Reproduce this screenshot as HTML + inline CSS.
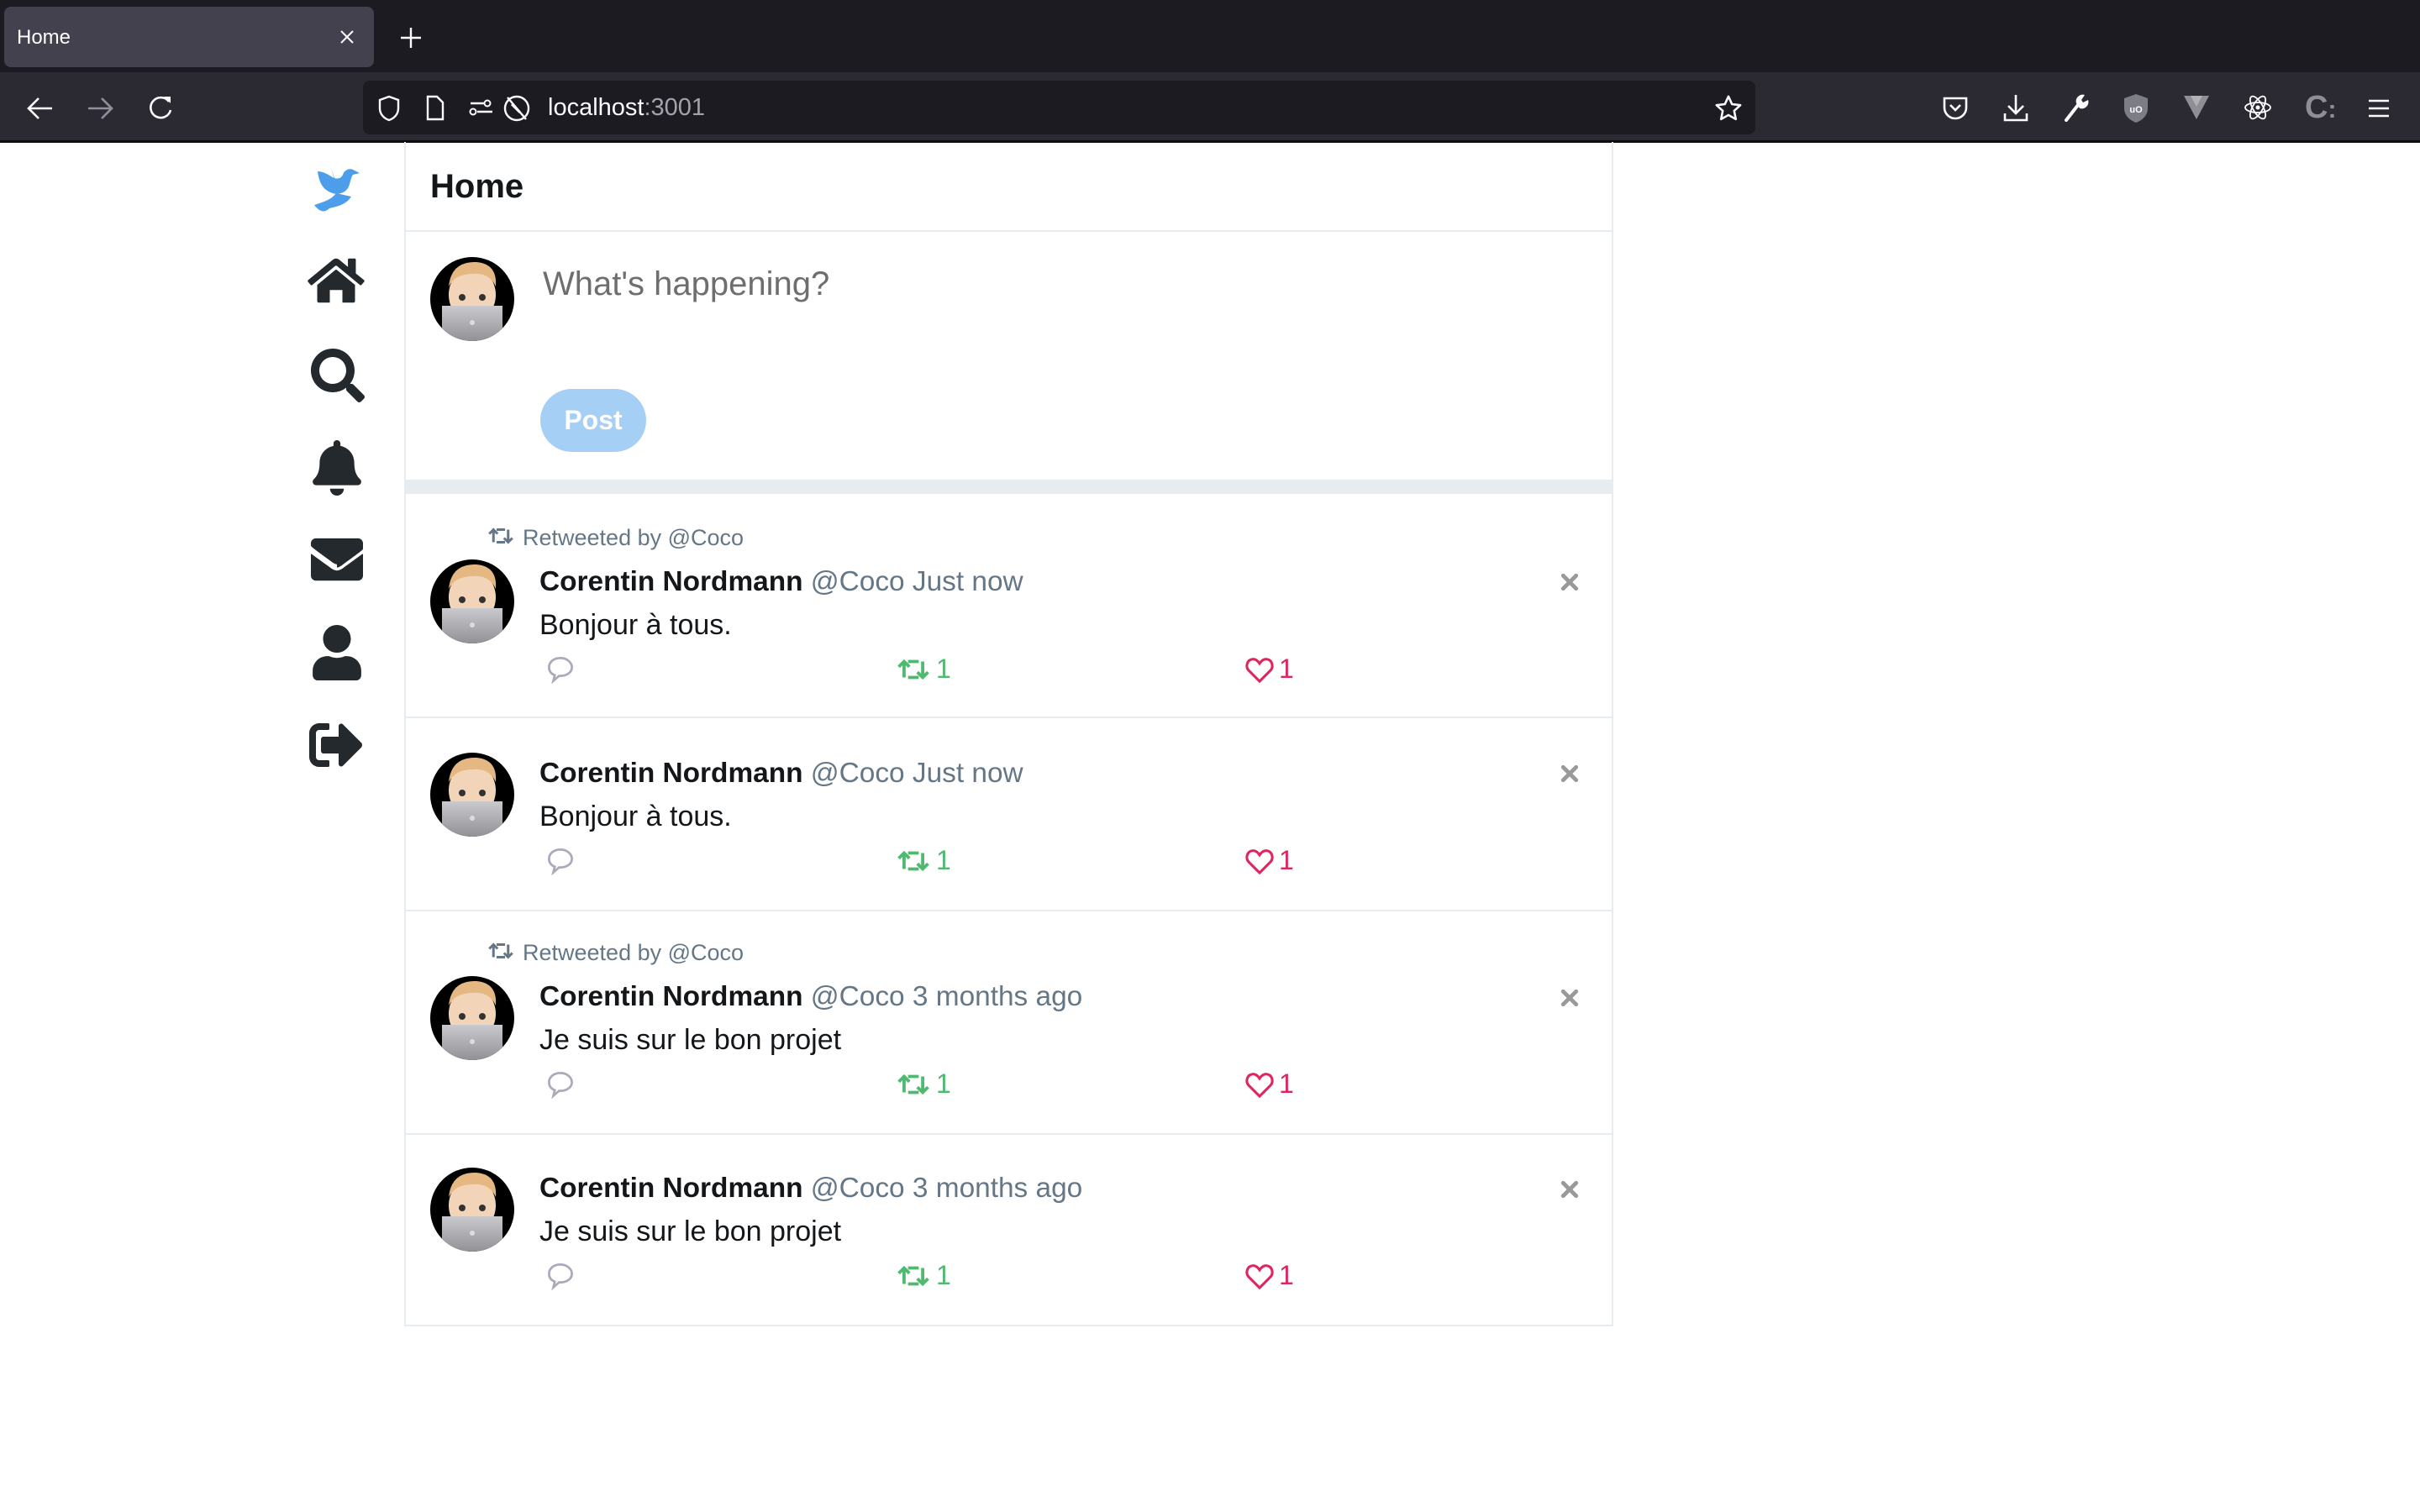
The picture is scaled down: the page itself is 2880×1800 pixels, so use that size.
<!DOCTYPE html>
<html><head><meta charset="utf-8"><style>
*{margin:0;padding:0;box-sizing:border-box}
body{width:2880px;height:1800px;background:#fff;font-family:"Liberation Sans",sans-serif;position:relative;overflow:hidden}
.a{position:absolute}
.tabbar{left:0;top:0;width:2880px;height:86px;background:#1c1b22}
.tool{left:0;top:86px;width:2880px;height:83px;background:#2b2a33}
.main{left:481px;top:169px;width:1439px;height:1410px;border-left:2px solid #e6ecf0;border-right:2px solid #e6ecf0;border-bottom:2px solid #e6ecf0}
.hl{position:absolute;left:481px;width:1439px;height:2px;background:#e6ecf0}
.name{font-size:33.4px;color:#14171a;white-space:nowrap}
.name b{font-weight:bold}
.name span{color:#657786}
.txt{font-size:34px;color:#14171a}
.rt{font-size:27px;color:#657786;white-space:nowrap}
.g{color:#4fba6f;font-size:32px}
.r{color:#e0245e;font-size:32px}
</style></head><body>
<svg width="0" height="0" style="position:absolute">
<defs>
<symbol id="av" viewBox="0 0 100 100">
<clipPath id="cc"><circle cx="50" cy="50" r="50"/></clipPath>
<g clip-path="url(#cc)">
<rect width="100" height="100" fill="#000"/>
<ellipse cx="50" cy="45" rx="28" ry="32" fill="#f2d4b8"/>
<path d="M22 35 Q25 5 55 6 Q80 8 78 35 Q70 18 50 20 Q30 20 22 35Z" fill="#e5b883"/>
<circle cx="38" cy="48" r="4" fill="#333"/><circle cx="62" cy="48" r="4" fill="#333"/>
<linearGradient id="lg" x1="0" y1="0" x2="0" y2="1"><stop offset="0" stop-color="#c9c9ce"/><stop offset="1" stop-color="#8d8d92"/></linearGradient>
<rect x="14" y="58" width="72" height="45" fill="url(#lg)"/>
<circle cx="50" cy="78" r="3" fill="#ddd"/>
</g></symbol>
<symbol id="rt" viewBox="0 0 24 16"><path d="M5 14V3M1 6l4-4 4 4M8 14h8M19 2v11M15 10l4 4 4-4M16 2H8" fill="none" stroke="currentColor" stroke-width="2.4"/></symbol>
<symbol id="cm" viewBox="0 0 20 20"><path d="M10 2C5 2 2 5 2 8.5c0 2.5 1.5 4.5 4 5.5l-1 4 4-3.5h1c5 0 8-3 8-6S15 2 10 2z" fill="none" stroke="#aab" stroke-width="1.6"/></symbol>
<symbol id="ht" viewBox="0 0 20 18"><path d="M10 17L2.5 9.5C0 7 1 2 5 1.5c2.5-.3 4 1.5 5 3 1-1.5 2.5-3.3 5-3 4 .5 5 5.5 2.5 8z" fill="none" stroke="#e0245e" stroke-width="1.8"/></symbol>
<symbol id="x" viewBox="0 0 10 10"><path d="M1.5 1.5l7 7M8.5 1.5l-7 7" stroke="#999" stroke-width="2.2" stroke-linecap="round"/></symbol>
</defs></svg>

<div class="a tabbar"></div>
<div class="a" style="left:5px;top:8px;width:440px;height:72px;background:#42414d;border-radius:8px"></div>
<div class="a" style="left:20px;top:31px;color:#fff;font-size:24px">Home</div>
<svg class="a" style="left:404px;top:35px" width="18" height="18" viewBox="0 0 18 18"><path d="M2 2l14 14M16 2L2 16" stroke="#fbfbfe" stroke-width="2"/></svg>
<svg class="a" style="left:476px;top:32px" width="26" height="26" viewBox="0 0 26 26"><path d="M13 1v24M1 13h24" stroke="#fbfbfe" stroke-width="2.4"/></svg>
<div class="a tool"></div>
<svg class="a" style="left:32px;top:115px" width="32" height="28" viewBox="0 0 32 28"><path d="M30 14H3M14 2L2 14l12 12" fill="none" stroke="#fbfbfe" stroke-width="2.6"/></svg>
<svg class="a" style="left:103px;top:115px" width="32" height="28" viewBox="0 0 32 28"><path d="M2 14h27M18 2l12 12-12 12" fill="none" stroke="#8f8f9d" stroke-width="2.6"/></svg>
<svg class="a" style="left:175px;top:113px" width="32" height="32" viewBox="0 0 32 32"><path d="M26 8A12 12 0 1 0 28 18" fill="none" stroke="#fbfbfe" stroke-width="2.6"/><path d="M20 2h8v8z" fill="#fbfbfe"/></svg>
<div class="a" style="left:432px;top:96px;width:1657px;height:64px;background:#1c1b22;border-radius:8px"></div>
<svg class="a" style="left:449px;top:113px" width="28" height="32" viewBox="0 0 28 32"><path d="M14 2L3 6v10c0 7 5 12 11 14 6-2 11-7 11-14V6z" fill="none" stroke="#fbfbfe" stroke-width="2.4"/></svg>
<svg class="a" style="left:506px;top:113px" width="24" height="32" viewBox="0 0 24 32"><path d="M3 2h11l7 7v20H3z" fill="none" stroke="#fbfbfe" stroke-width="2.4"/></svg>
<svg class="a" style="left:558px;top:117px" width="32" height="24" viewBox="0 0 32 24"><circle cx="5" cy="16" r="3.5" fill="none" stroke="#fbfbfe" stroke-width="2"/><circle cx="22" cy="6" r="3.5" fill="none" stroke="#fbfbfe" stroke-width="2"/><path d="M2 6h16M10 16h18" stroke="#fbfbfe" stroke-width="2.4"/></svg>
<svg class="a" style="left:598px;top:112px" width="34" height="34" viewBox="0 0 34 34"><circle cx="17" cy="17" r="14" fill="none" stroke="#fbfbfe" stroke-width="2.4"/><path d="M6 4l22 26" stroke="#fbfbfe" stroke-width="2.4"/><path d="M11 12l10 10" stroke="#fbfbfe" stroke-width="3"/></svg>
<div class="a" style="left:652px;top:112px;font-size:29px;color:#fbfbfe">localhost<span style="color:#a3a3ad">:3001</span></div>
<svg class="a" style="left:2040px;top:112px" width="34" height="34" viewBox="0 0 24 24"><path d="M12 2l3 6.5 7 .8-5.2 4.8 1.4 7L12 17.6 5.8 21.1l1.4-7L2 9.3l7-.8z" fill="none" stroke="#fbfbfe" stroke-width="1.8" stroke-linejoin="round"/></svg>
<svg class="a" style="left:2311px;top:114px" width="32" height="30" viewBox="0 0 32 30"><path d="M3 3h26v11a13 13 0 0 1-26 0z" fill="none" stroke="#fbfbfe" stroke-width="2.6"/><path d="M10 11l6 6 6-6" fill="none" stroke="#fbfbfe" stroke-width="2.6"/></svg>
<svg class="a" style="left:2383px;top:111px" width="32" height="34" viewBox="0 0 32 34"><path d="M16 2v22M7 15l9 9 9-9M3 24v8h26v-8" fill="none" stroke="#fbfbfe" stroke-width="2.6"/></svg>
<svg class="a" style="left:2455px;top:111px" width="32" height="34" viewBox="0 0 32 34"><path d="M4 32L18 14" stroke="#fbfbfe" stroke-width="4" stroke-linecap="round"/><path d="M16 12a8 8 0 0 1 10-10l-4 6 2 3 6-3a8 8 0 0 1-10 10z" fill="#fbfbfe"/></svg>
<svg class="a" style="left:2526px;top:111px" width="32" height="36" viewBox="0 0 32 36"><path d="M16 1L2 6v12c0 8 6 14 14 17 8-3 14-9 14-17V6z" fill="#7d7d85"/><text x="16" y="23" font-size="11" fill="#fff" text-anchor="middle" font-family="Liberation Sans" font-weight="bold">uO</text></svg>
<svg class="a" style="left:2598px;top:113px" width="32" height="30" viewBox="0 0 32 30"><path d="M1 1h30L16 29z" fill="#8e8e95"/><path d="M9 1h14L16 14z" fill="#b0b0b6"/></svg>
<svg class="a" style="left:2670px;top:111px" width="34" height="34" viewBox="0 0 34 34"><g fill="none" stroke="#fbfbfe" stroke-width="1.8"><ellipse cx="17" cy="17" rx="15" ry="6"/><ellipse cx="17" cy="17" rx="15" ry="6" transform="rotate(60 17 17)"/><ellipse cx="17" cy="17" rx="15" ry="6" transform="rotate(-60 17 17)"/></g><circle cx="17" cy="17" r="2.5" fill="#fbfbfe"/></svg>
<div class="a" style="left:2743px;top:107px;font-size:38px;font-weight:bold;color:#8e8e95">C<span style="font-size:30px">:</span></div>
<svg class="a" style="left:2817px;top:117px" width="28" height="24" viewBox="0 0 28 24"><path d="M2 3h24M2 12h24M2 21h24" stroke="#fbfbfe" stroke-width="2.6"/></svg>
<div class="a" style="left:0;top:167px;width:2880px;height:3px;background:#0c0c0d"></div>

<svg class="a" style="left:370px;top:194px" width="64" height="64" viewBox="0 0 64 64"><path d="M8 10c2 14 6 22 18 26 6 2 14 0 18-6 3-5 3-12 6-16l8-2-8-4c-4-2-10 0-12 6-2 5-8 6-14 2C18 12 12 10 8 10z" fill="#4d9eea"/><path d="M30 36c-6 8-14 10-26 14 6 8 12 10 18 4 8-2 20-4 26-14z" fill="#4d9eea"/><path d="M24 6l4 12 8 4-8-2z" fill="#4d9eea"/></svg>
<svg class="a" style="left:366px;top:304px" width="68" height="60" viewBox="0 0 576 512"><path fill="#24292e" d="M280 148L96 300v164c0 9 7 16 16 16h112V352h128v128h112c9 0 16-7 16-16V300L296 148c-5-4-11-4-16 0zM571 251L488 183V44c0-7-5-12-12-12h-56c-7 0-12 5-12 12v73L318 43c-18-15-43-15-61 0L4 251c-5 4-6 12-2 17l26 31c4 5 12 6 17 2l235-194c4-4 11-4 15 0l235 194c5 4 13 4 17-2l26-31c4-5 3-13-2-17z"/></svg>
<svg class="a" style="left:370px;top:415px" width="64" height="64" viewBox="0 0 512 512"><path fill="#24292e" d="M505 443l-100-100c-4-4-10-7-17-7h-16c28-35 44-80 44-128C416 93 323 0 208 0S0 93 0 208s93 208 208 208c48 0 93-16 128-44v16c0 7 3 13 7 17l100 100c9 9 25 9 34 0l28-28c9-10 9-25 0-34zM208 336c-71 0-128-57-128-128S137 80 208 80s128 57 128 128-57 128-128 128z"/></svg>
<svg class="a" style="left:372px;top:524px" width="58" height="66" viewBox="0 0 448 512"><path fill="#24292e" d="M224 512c35 0 64-29 64-64H160c0 35 29 64 64 64zm215-150c-19-21-55-52-55-154 0-78-54-140-128-155V32c0-18-14-32-32-32s-32 14-32 32v21C118 68 64 130 64 208c0 102-36 133-55 154-6 6-9 14-9 22 0 16 13 32 32 32h384c19 0 32-16 32-32 0-8-3-16-9-22z"/></svg>
<svg class="a" style="left:370px;top:640px" width="62" height="52" viewBox="0 0 512 416"><path fill="#24292e" d="M502 156c4-3 10 0 10 5v207c0 26-22 48-48 48H48c-26 0-48-22-48-48V161c0-5 6-8 10-5 22 17 52 39 154 113 21 15 57 48 92 48s72-33 92-48c102-74 132-96 154-113zM256 288c23 0 57-29 73-41 133-96 143-105 173-129 6-4 10-11 10-19V48c0-26-22-48-48-48H48C22 0 0 22 0 48v19c0 8 4 15 10 19 30 24 40 33 173 129 16 12 50 41 73 41z"/></svg>
<svg class="a" style="left:372px;top:744px" width="58" height="66" viewBox="0 0 448 512"><path fill="#24292e" d="M224 256c71 0 128-57 128-128S295 0 224 0 96 57 96 128s57 128 128 128zm90 32h-17c-22 10-47 16-73 16s-51-6-73-16h-17C60 288 0 348 0 422v42c0 27 22 48 48 48h352c27 0 48-21 48-48v-42c0-74-60-134-134-134z"/></svg>
<svg class="a" style="left:368px;top:860px" width="64" height="54" viewBox="0 0 512 432"><path fill="#24292e" d="M497 237L321 413c-15 15-41 4-41-17V296H136c-13 0-24-11-24-24v-112c0-13 11-24 24-24h144V36c0-21 26-32 41-17l176 176c9 10 9 26 0 42zM192 412v-40c0-7-5-12-12-12H96c-18 0-32-14-32-32V104c0-18 14-32 32-32h84c7 0 12-5 12-12V20c0-7-5-12-12-12H96C43 8 0 51 0 104v224c0 53 43 96 96 96h84c7 0 12-5 12-12z"/></svg>

<div class="a main"></div>
<div class="a" style="left:512px;top:200px;font-size:40px;font-weight:bold;color:#14171a">Home</div>
<div class="hl" style="top:274px"></div>
<svg class="a" style="left:512px;top:306px" width="100" height="100"><use href="#av"/></svg>
<div class="a" style="left:646px;top:316px;font-size:40px;color:#6e6e6e">What's happening?</div>
<div class="a" style="left:643px;top:463px;width:126px;height:75px;border-radius:38px;background:#a5cff4;color:#fff;font-size:32px;font-weight:bold;text-align:center;line-height:75px">Post</div>
<div class="hl" style="top:571px;height:17px"></div>

<svg class="a" style="left:581px;top:628px;color:#657786" width="30" height="20"><use href="#rt"/></svg>
<div class="a rt" style="left:622px;top:625px">Retweeted by @Coco</div>
<svg class="a" style="left:512px;top:666px" width="100" height="100"><use href="#av"/></svg>
<div class="a name" style="left:642px;top:674px"><b>Corentin Nordmann</b> <span>@Coco Just now</span></div>
<div class="a txt" style="left:642px;top:725px">Bonjour à tous.</div>
<svg class="a" style="left:650px;top:780px" width="34" height="34"><use href="#cm"/></svg>
<svg class="a" style="left:1068px;top:784px;color:#4fba6f" width="38" height="26"><use href="#rt"/></svg>
<div class="a g" style="left:1114px;top:778px">1</div>
<svg class="a" style="left:1482px;top:782px" width="34" height="31"><use href="#ht"/></svg>
<div class="a r" style="left:1522px;top:778px">1</div>
<svg class="a" style="left:1857px;top:682px" width="22" height="22"><use href="#x"/></svg>
<div class="hl" style="top:853px"></div>

<svg class="a" style="left:512px;top:896px" width="100" height="100"><use href="#av"/></svg>
<div class="a name" style="left:642px;top:902px"><b>Corentin Nordmann</b> <span>@Coco Just now</span></div>
<div class="a txt" style="left:642px;top:953px">Bonjour à tous.</div>
<svg class="a" style="left:650px;top:1008px" width="34" height="34"><use href="#cm"/></svg>
<svg class="a" style="left:1068px;top:1012px;color:#4fba6f" width="38" height="26"><use href="#rt"/></svg>
<div class="a g" style="left:1114px;top:1006px">1</div>
<svg class="a" style="left:1482px;top:1010px" width="34" height="31"><use href="#ht"/></svg>
<div class="a r" style="left:1522px;top:1006px">1</div>
<svg class="a" style="left:1857px;top:910px" width="22" height="22"><use href="#x"/></svg>
<div class="hl" style="top:1083px"></div>

<svg class="a" style="left:581px;top:1122px;color:#657786" width="30" height="20"><use href="#rt"/></svg>
<div class="a rt" style="left:622px;top:1119px">Retweeted by @Coco</div>
<svg class="a" style="left:512px;top:1162px" width="100" height="100"><use href="#av"/></svg>
<div class="a name" style="left:642px;top:1168px"><b>Corentin Nordmann</b> <span>@Coco 3 months ago</span></div>
<div class="a txt" style="left:642px;top:1219px">Je suis sur le bon projet</div>
<svg class="a" style="left:650px;top:1274px" width="34" height="34"><use href="#cm"/></svg>
<svg class="a" style="left:1068px;top:1278px;color:#4fba6f" width="38" height="26"><use href="#rt"/></svg>
<div class="a g" style="left:1114px;top:1272px">1</div>
<svg class="a" style="left:1482px;top:1276px" width="34" height="31"><use href="#ht"/></svg>
<div class="a r" style="left:1522px;top:1272px">1</div>
<svg class="a" style="left:1857px;top:1177px" width="22" height="22"><use href="#x"/></svg>
<div class="hl" style="top:1349px"></div>

<svg class="a" style="left:512px;top:1390px" width="100" height="100"><use href="#av"/></svg>
<div class="a name" style="left:642px;top:1396px"><b>Corentin Nordmann</b> <span>@Coco 3 months ago</span></div>
<div class="a txt" style="left:642px;top:1447px">Je suis sur le bon projet</div>
<svg class="a" style="left:650px;top:1502px" width="34" height="34"><use href="#cm"/></svg>
<svg class="a" style="left:1068px;top:1506px;color:#4fba6f" width="38" height="26"><use href="#rt"/></svg>
<div class="a g" style="left:1114px;top:1500px">1</div>
<svg class="a" style="left:1482px;top:1504px" width="34" height="31"><use href="#ht"/></svg>
<div class="a r" style="left:1522px;top:1500px">1</div>
<svg class="a" style="left:1857px;top:1405px" width="22" height="22"><use href="#x"/></svg>
</body></html>
